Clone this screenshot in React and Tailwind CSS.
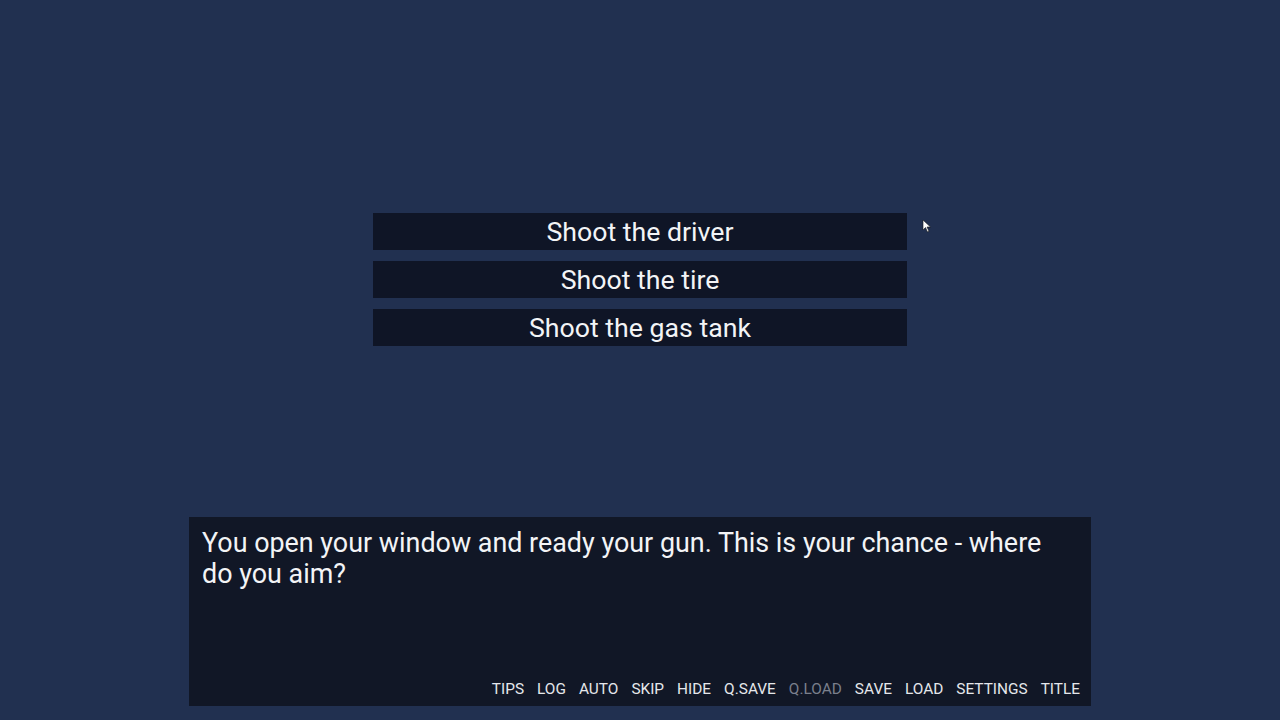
import React from "react";

const choices = ["Shoot the driver", "Shoot the tire", "Shoot the gas tank"];
const menu = ["TIPS", "LOG", "AUTO", "SKIP", "HIDE", "Q.SAVE", "Q.LOAD", "SAVE", "LOAD", "SETTINGS", "TITLE"];

export default function App() {
  return (
    <div
      className="relative w-[1280px] h-[720px] bg-[#213050] flex flex-col items-center overflow-hidden"
      style={{ fontFamily: "Roboto, 'Noto Sans', sans-serif" }}
    >
      <div className="pt-[213px] flex flex-col gap-[11px]">
        {choices.map((c) => (
          <div
            key={c}
            className="w-[534px] h-[37px] bg-[#0f1526] text-[#f3f4f6] text-[26.7px] leading-[39px] text-center overflow-hidden"
          >
            {c}
          </div>
        ))}
      </div>
      <div className="flex-1" />
      <div className="mb-[14px] w-[902px] h-[189px] bg-[#111726] flex flex-col">
        <div className="pl-[13px] pr-[24px] pt-[11px] text-[26.9px] leading-[31px] text-[#f3f4f6]">
          You open your window and ready your gun. This is your chance - where do you aim?
        </div>
        <div className="flex-1" />
        <div className="flex justify-end gap-[13px] pr-[11px] pb-[8px] text-[15.4px] leading-[18px]">
          {menu.map((m) => (
            <span key={m} className={m === "Q.LOAD" ? "text-[#7a7f8c]" : "text-[#e5e7eb]"}>
              {m}
            </span>
          ))}
        </div>
      </div>
      <svg className="absolute left-[922px] top-[219px]" width="10" height="14" viewBox="0 0 10 14">
        <path d="M1 1 L1 11 L3.5 8.5 L5.5 13 L7 12.3 L5 8 L8.5 8 Z" fill="#ffffff" stroke="#1a1a1a" strokeWidth="0.6" />
      </svg>
    </div>
  );
}
